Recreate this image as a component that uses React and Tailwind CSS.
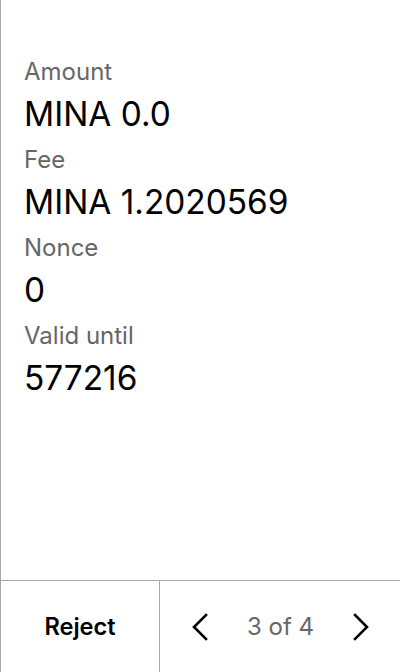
const ROWS = [
  { label: 'Amount', value: 'MINA 0.0' },
  { label: 'Fee', value: 'MINA 1.2020569' },
  { label: 'Nonce', value: '0' },
  { label: 'Valid until', value: '577216' },
]

function Chevron({ dir }) {
  return (
    <svg width="16" height="28" viewBox="0 0 16 28" fill="none" stroke="#000" strokeWidth="2.6" strokeLinecap="square" strokeLinejoin="miter">
      {dir === 'left' ? <path d="M14 2 L2 14 L14 26" /> : <path d="M2 2 L14 14 L2 26" />}
    </svg>
  )
}

export default function App() {
  return (
    <div className="h-[672px] w-[400px] flex flex-col bg-white border-l border-[#a8a8a8] font-['Inter',sans-serif] text-black">
      <div className="flex-1 pl-[23px] pt-[56px]">
        {ROWS.map((r) => (
          <div key={r.label} className="mb-[10px]">
            <p className="text-[24px] leading-[32px] text-[#666666]">{r.label}</p>
            <p className="mt-[6px] text-[33.4px] leading-[40px]">{r.value}</p>
          </div>
        ))}
      </div>
      <div className="h-[92px] flex border-t border-[#a8a8a8]">
        <button className="w-[159px] border-r border-[#a8a8a8] flex items-center justify-center text-[23.6px] font-semibold">
          Reject
        </button>
        <div className="flex-1 flex items-center justify-between pl-[32px] pr-[31px]">
          <Chevron dir="left" />
          <span className="text-[24px] text-[#666666]">3 of 4</span>
          <Chevron dir="right" />
        </div>
      </div>
    </div>
  )
}
